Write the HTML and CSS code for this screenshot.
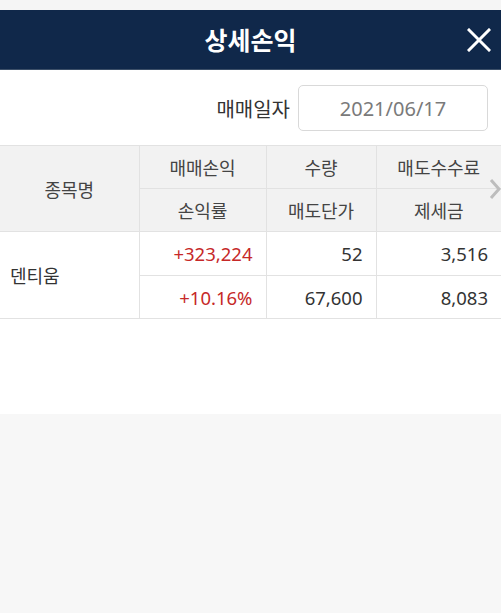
FILE: index.html
```html
<!DOCTYPE html>
<html lang="ko">
<head>
<meta charset="utf-8">
<title>상세손익</title>
<link rel="stylesheet" href="styles.css">
</head>
<body>
<div class="top-strip"></div>
<header class="bar">
  <h1 class="title">상세손익</h1>
  <button class="close" aria-label="닫기">
    <svg width="24" height="24" viewBox="0 0 24 24"><path d="M2 2 L22 22 M22 2 L2 22" stroke="#fff" stroke-width="3" stroke-linecap="square" fill="none"/></svg>
  </button>
</header>
<main class="sheet">
  <div class="date-row">
    <span class="date-label">매매일자</span>
    <div class="date-box">2021/06/17</div>
  </div>
  <div class="table-wrap">
    <table class="grid">
      <colgroup>
        <col class="c1"><col class="c2"><col class="c3"><col class="c4">
      </colgroup>
      <thead>
        <tr>
          <th rowspan="2" class="first">종목명</th>
          <th>매매손익</th>
          <th>수량</th>
          <th>매도수수료</th>
        </tr>
        <tr>
          <th>손익률</th>
          <th>매도단가</th>
          <th>제세금</th>
        </tr>
      </thead>
      <tbody>
        <tr class="row-a">
          <td rowspan="2" class="first name">덴티움</td>
          <td class="num up">+323,224</td>
          <td class="num">52</td>
          <td class="num">3,516</td>
        </tr>
        <tr class="row-b">
          <td class="num up">+10.16%</td>
          <td class="num">67,600</td>
          <td class="num">8,083</td>
        </tr>
      </tbody>
    </table>
    <svg class="more" width="12" height="22" viewBox="0 0 12 22"><path d="M2 2 L10 11 L2 20" stroke="#bdbdbd" stroke-width="3" fill="none"/></svg>
  </div>
</main>
</body>
</html>
```

FILE: styles.css
```css
html, body {
  margin: 0;
  padding: 0;
}
body {
  background: #f7f7f7;
  font-family: "Noto Sans", "Noto Sans CJK KR", sans-serif;
  color: #333;
  width: 501px;
  overflow: hidden;
}
.top-strip {
  height: 10px;
  background: #f5f5f5;
}
.bar {
  height: 59px;
  background: #10284a;
  border-bottom: 1px solid #3c4f68;
  display: flex;
  align-items: center;
  justify-content: center;
  position: relative;
}
.title {
  margin: 0;
  color: #fff;
  font-family: "Noto Sans CJK KR", sans-serif;
  font-size: 25px;
  font-weight: 700;
  line-height: 1;
}
.close {
  position: absolute;
  right: 10px;
  top: 18px;
  width: 24px;
  height: 24px;
  padding: 0;
  border: 0;
  background: none;
  display: flex;
}
.sheet {
  background: #fff;
  padding-bottom: 95px;
}
.date-row {
  display: flex;
  justify-content: flex-end;
  align-items: center;
  gap: 8px;
  padding: 15px 13px 14px 0;
}
.date-label {
  font-family: "Noto Sans CJK KR", sans-serif;
  font-size: 20px;
  color: #333;
}
.date-box {
  width: 188px;
  height: 44px;
  border: 1px solid #d9d9d9;
  border-radius: 5px;
  display: flex;
  align-items: center;
  justify-content: center;
  font-size: 20px;
  color: #7a7a7a;
}
.table-wrap {
  position: relative;
}
.grid {
  width: 501px;
  border-collapse: collapse;
  table-layout: fixed;
  font-size: 18.5px;
}
.c1 { width: 139px; }
.c2 { width: 127px; }
.c3 { width: 110px; }
.c4 { width: 125px; }
.grid th, .grid td {
  border-top: 1px solid #e2e2e2;
  border-bottom: 1px solid #e2e2e2;
  border-left: 1px solid #e2e2e2;
  padding: 0 12px;
}
.grid .first {
  border-left: 0;
}
.grid th {
  height: 42px;
  background: #f2f2f2;
  font-family: "Noto Sans CJK KR", sans-serif;
  font-size: 18px;
  font-weight: 400;
  color: #444;
  text-align: center;
}
.grid td {
  color: #333;
}
.row-a td {
  height: 43px;
}
.row-b td {
  height: 42px;
}
.grid td.name {
  text-align: left;
  padding-left: 10px;
  font-family: "Noto Sans CJK KR", sans-serif;
  font-size: 18px;
}
.grid td.num {
  text-align: right;
  padding-right: 13px;
}
.grid td.up {
  color: #c62828;
}
.more {
  position: absolute;
  right: 0;
  top: 33px;
}
```
